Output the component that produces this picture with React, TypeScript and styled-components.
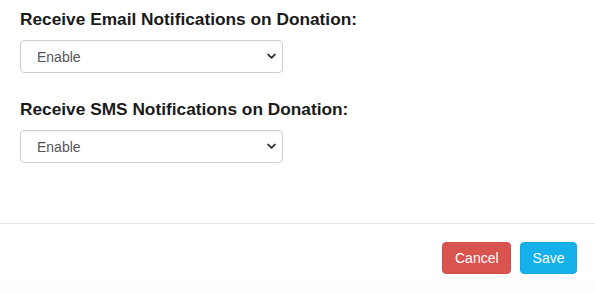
import styled, { createGlobalStyle } from "styled-components";

const GlobalStyle = createGlobalStyle`
  html, body {
    margin: 0;
    padding: 0;
    background: #ffffff;
    font-family: "Liberation Sans", Arial, Helvetica, sans-serif;
  }
`;

const Modal = styled.div`
  width: 595px;
  height: 293px;
  display: flex;
  flex-direction: column;
  background: #fff;
`;

const Body = styled.div`
  padding: 9px 20px 0 20px;
  height: 223px;
  flex-shrink: 0;
  box-sizing: border-box;
`;

const FieldGroup = styled.div`
  margin-bottom: 26px;
`;

const Label = styled.label`
  display: block;
  font-size: 17.3px;
  font-weight: 700;
  color: #1a1a1a;
  line-height: 21px;
  margin-bottom: 10px;
`;

const SelectWrap = styled.div`
  position: relative;
  width: 263px;
`;

const Select = styled.select`
  appearance: none;
  -webkit-appearance: none;
  width: 100%;
  height: 33px;
  box-sizing: border-box;
  padding: 0 30px 0 16px;
  font-family: inherit;
  font-size: 14px;
  color: #555;
  background: #fff;
  border: 1px solid #cfcfcf;
  border-radius: 4px;
  box-shadow: inset 0 1px 1px rgba(0, 0, 0, 0.04);
  outline: none;
`;

const Chevron = styled.svg`
  position: absolute;
  right: 7px;
  top: 13px;
  pointer-events: none;
`;

const Footer = styled.div`
  border-top: 1px solid #e5e5e5;
  display: flex;
  justify-content: flex-end;
  align-items: flex-start;
  gap: 9px;
  padding: 18px 18px 0 0;
  flex: 1;
  background: linear-gradient(to bottom, #fff 0, #fff 85%, #fcfcfc 100%);
`;

const Button = styled.button<{ $tone: "danger" | "info" }>`
  height: 32px;
  padding: 0 11.5px;
  border: 1px solid
    ${({ $tone }) => ($tone === "danger" ? "#d14b47" : "#12a9e2")};
  border-radius: 4px;
  background: ${({ $tone }) => ($tone === "danger" ? "#d9534f" : "#16b1eb")};
  color: #fff;
  font-family: inherit;
  font-size: 14px;
  cursor: pointer;
`;

const options = ["Enable", "Disable"];

function NotificationField({ label }: { label: string }) {
  return (
    <FieldGroup>
      <Label>{label}</Label>
      <SelectWrap>
        <Select defaultValue="Enable">
          {options.map((o) => (
            <option key={o}>{o}</option>
          ))}
        </Select>
        <Chevron width="9" height="7" viewBox="0 0 9 7">
          <path
            d="M1.2 1.6 L4.5 4.9 L7.8 1.6"
            fill="none"
            stroke="#333"
            strokeWidth="1.9"
            strokeLinecap="round"
            strokeLinejoin="round"
          />
        </Chevron>
      </SelectWrap>
    </FieldGroup>
  );
}

export default function App() {
  return (
    <>
      <GlobalStyle />
      <Modal>
        <Body>
          <NotificationField label="Receive Email Notifications on Donation:" />
          <NotificationField label="Receive SMS Notifications on Donation:" />
        </Body>
        <Footer>
          <Button $tone="danger">Cancel</Button>
          <Button $tone="info">Save</Button>
        </Footer>
      </Modal>
    </>
  );
}
